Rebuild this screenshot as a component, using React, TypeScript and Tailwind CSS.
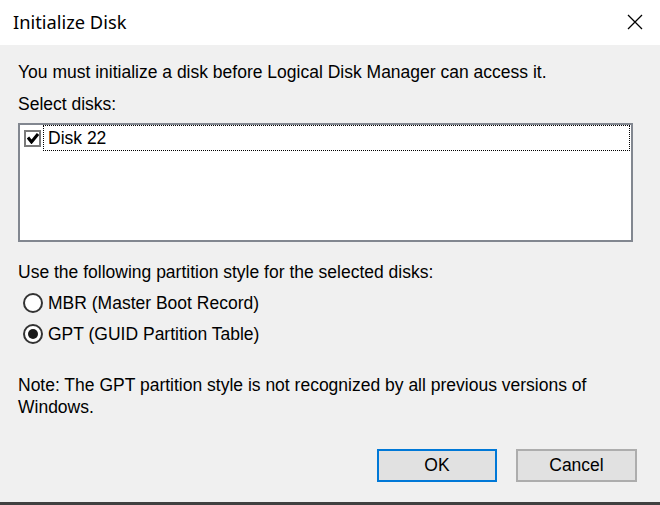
import React from 'react';

const body = { fontFamily: '"Liberation Sans", Arial, sans-serif' };

const Radio = ({ checked, label }: { checked?: boolean; label: string }) => (
  <div className="flex h-[22px] items-center">
    <span className="ml-[5px] flex h-[20px] w-[20px] items-center justify-center rounded-full border-2 border-[#333333] bg-white">
      {checked && <span className="h-[10px] w-[10px] rounded-full bg-[#1a1a1a]" />}
    </span>
    <span className="ml-[5px]">{label}</span>
  </div>
);

export default function App() {
  return (
    <div className="flex h-[505px] w-[660px] flex-col bg-[#f0f0f0] text-[17.5px] text-black" style={body}>
      {/* title bar */}
      <div className="flex h-[45px] items-center justify-between bg-white pl-[13px] pr-[17px]">
        <span className="text-[18.3px] leading-none" style={{ fontFamily: '"Noto Sans", "Open Sans", sans-serif' }}>
          Initialize Disk
        </span>
        <svg width="16" height="16" viewBox="0 0 16 16" className="mt-[-2px]">
          <path d="M1 1 L15 15 M15 1 L1 15" stroke="#000" strokeWidth="1.3" fill="none" />
        </svg>
      </div>

      <div className="flex flex-1 flex-col px-[18px] pt-[16px]">
        <p className="leading-[22px]">You must initialize a disk before Logical Disk Manager can access it.</p>
        <p className="mt-[10px] leading-[22px]">Select disks:</p>

        {/* disk list */}
        <div className="mt-[8px] h-[119px] w-[615px] border-2 border-[#828790] bg-white pr-[1px]">
          <div className="flex h-[26px] items-center pl-[4px]">
            <span className="flex h-[17px] w-[17px] shrink-0 items-center justify-center border-2 border-[#7a7a7a] bg-white">
              <svg width="12" height="11" viewBox="0 0 12 11">
                <path d="M1 4.5 L4.5 9 L11 1" stroke="#000" strokeWidth="3" fill="none" />
              </svg>
            </span>
            <div className="ml-[2px] flex h-[26px] flex-1 items-center border border-dotted border-black pl-[4px]">
              Disk 22
            </div>
          </div>
        </div>

        <p className="mt-[19px] leading-[22px]">Use the following partition style for the selected disks:</p>
        <div className="mt-[9px] flex flex-col gap-[9px]">
          <Radio label="MBR (Master Boot Record)" />
          <Radio checked label="GPT (GUID Partition Table)" />
        </div>

        <p className="mt-[29px] leading-[22px]">
          Note: The GPT partition style is not recognized by all previous versions of
          <br />
          Windows.
        </p>

        <div className="mt-[31px] flex justify-end gap-[19px] pr-[5px]">
          <button className="h-[33px] w-[120px] border-2 border-[#0078d7] bg-[#e1e1e1]">OK</button>
          <button className="h-[33px] w-[121px] border-2 border-[#adadad] bg-[#e1e1e1]">Cancel</button>
        </div>
      </div>
      <div className="h-[3px] bg-[#404040]" />
    </div>
  );
}
